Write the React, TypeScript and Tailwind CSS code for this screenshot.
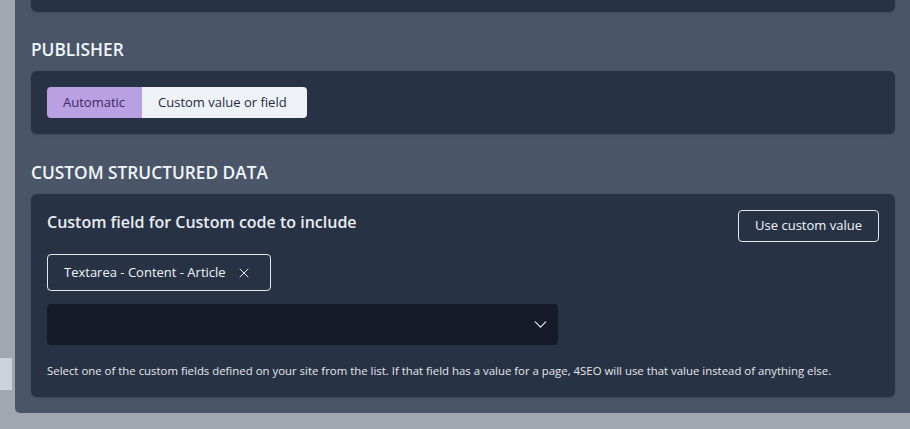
import React from "react";
import { ChevronDown, X } from "lucide-react";

export default function App() {
  const font = { fontFamily: "'Open Sans', 'Noto Sans', sans-serif" };
  return (
    <div className="w-[910px] h-[429px] bg-[#a2a6ae] flex flex-col overflow-hidden" style={font}>
      <div className="flex h-[413px]">
        <div className="w-[15px] flex flex-col">
          <div className="mt-[358px] h-[32px] w-[12px] bg-[#cdd3dd]" />
        </div>
        <div className="flex-1 bg-[#4a5568] rounded-bl-[5px] pl-[16px] pr-[15px] flex flex-col">
          <div className="h-[12px] bg-[#283245] rounded-b-[6px] shadow-sm" />
          <h2 className="mt-[26px] mb-[9px] h-[24px] leading-[24px] text-[17.3px] font-semibold text-[#f1f5f9]">PUBLISHER</h2>
          <div className="bg-[#283245] rounded-[6px] p-[16px] shadow-sm">
            <div className="flex w-fit rounded-[4px] overflow-hidden text-[13px] h-[31px]">
              <div className="bg-[#b9a0e2] text-[#3d2a62] pl-[16px] pr-[17px] flex items-center">Automatic</div>
              <div className="bg-[#eef2f7] text-[#1e293b] pl-[16px] pr-[20px] flex items-center">Custom value or field</div>
            </div>
          </div>
          <h2 className="mt-[27px] mb-[9px] h-[24px] leading-[24px] text-[17.3px] font-semibold text-[#f1f5f9]">CUSTOM STRUCTURED DATA</h2>
          <div className="bg-[#283245] rounded-[6px] pt-[16px] px-[16px] pb-[18px] shadow-sm">
            <div className="flex justify-between items-start">
              <div className="mt-[2px] leading-[20px] text-[16px] font-semibold text-[#e8ecf1]">Custom field for Custom code to include</div>
              <button className="h-[32px] px-[16px] border border-[#e5e7eb] rounded-[4px] text-[13px] text-[#f1f5f9]">Use custom value</button>
            </div>
            <div className="mt-[12px] flex">
              <div className="h-[37px] border border-[#e5e7eb] rounded-[4px] pl-[16px] pr-[18px] flex items-center gap-[10px] text-[13px] text-[#f1f5f9]">
                <span>Textarea - Content - Article</span>
                <X size={16} strokeWidth={1.5} className="text-[#e5e7eb]" />
              </div>
            </div>
            <div className="mt-[13px] w-[511px] h-[41px] bg-[#161b29] rounded-[4px] flex items-center justify-end pr-[7px]">
              <ChevronDown size={21} strokeWidth={1.4} className="text-[#e5e7eb]" />
            </div>
            <p className="mt-[18px] leading-[16px] text-[11.4px] text-[#e5e7eb]">
              Select one of the custom fields defined on your site from the list. If that field has a value for a page, 4SEO will use that value instead of anything else.
            </p>
          </div>
        </div>
      </div>
    </div>
  );
}
